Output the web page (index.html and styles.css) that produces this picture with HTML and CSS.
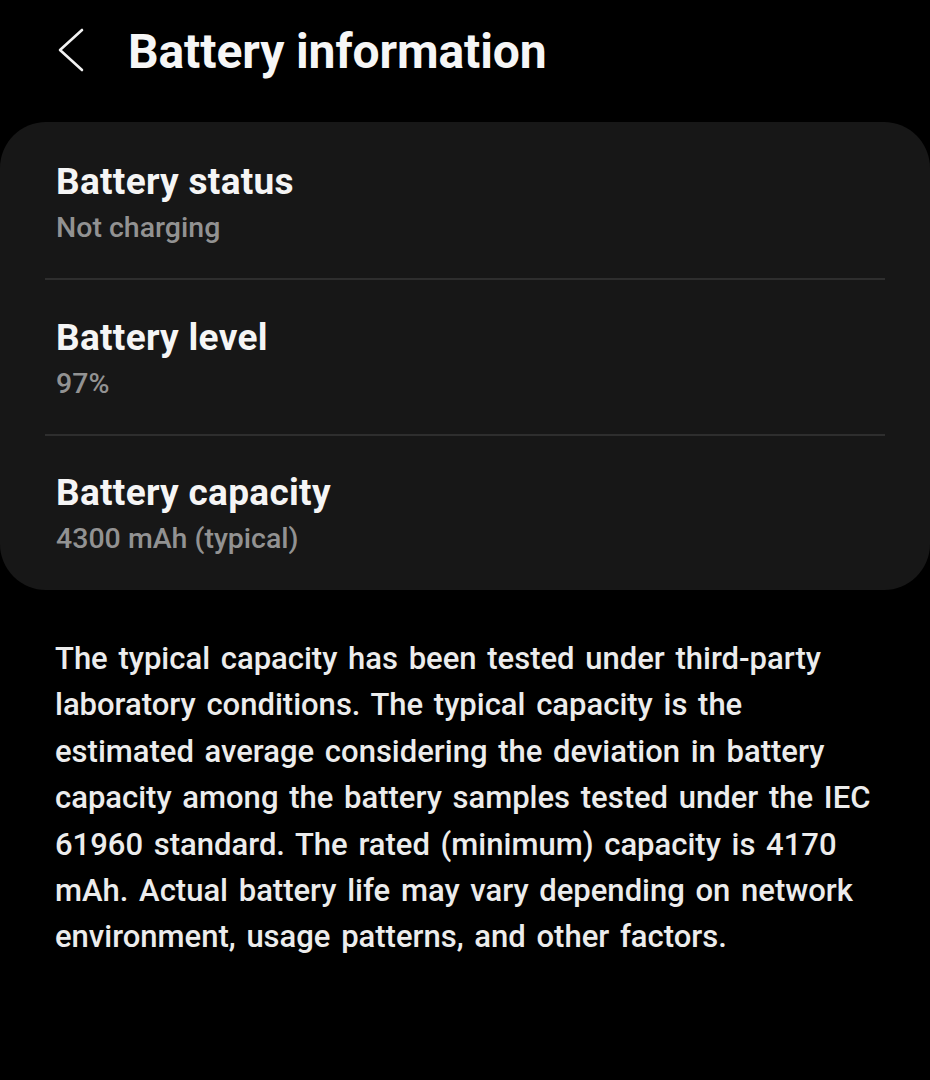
FILE: index.html
```html
<!DOCTYPE html>
<html lang="en">
<head>
<meta charset="utf-8">
<title>Battery information</title>
<link rel="stylesheet" href="styles.css">
</head>
<body>
<div class="screen">
  <header class="appbar">
    <svg class="back" width="28" height="46" viewBox="0 0 28 46" aria-hidden="true">
      <path d="M25 3 L3 23 L25 43" fill="none" stroke="#f2f2f2" stroke-width="2.6" stroke-linecap="round" stroke-linejoin="round"/>
    </svg>
    <h1 class="title">Battery information</h1>
  </header>

  <section class="card">
    <div class="row">
      <div class="row-title">Battery status</div>
      <div class="row-sub">Not charging</div>
    </div>
    <div class="divider"></div>
    <div class="row">
      <div class="row-title">Battery level</div>
      <div class="row-sub">97%</div>
    </div>
    <div class="divider"></div>
    <div class="row">
      <div class="row-title">Battery capacity</div>
      <div class="row-sub">4300 mAh (typical)</div>
    </div>
  </section>

  <p class="note">The typical capacity has been tested under third-party laboratory conditions. The typical capacity is the estimated average considering the deviation in battery capacity among the battery samples tested under the IEC 61960 standard. The rated (minimum) capacity is 4170 mAh. Actual battery life may vary depending on network environment, usage patterns, and other factors.</p>
</div>
</body>
</html>
```

FILE: styles.css
```css
html, body {
  margin: 0;
  padding: 0;
  background: #000;
}
body {
  font-family: Roboto, "Noto Sans", "Liberation Sans", sans-serif;
  color: #f4f4f4;
  width: 930px;
  height: 1080px;
  overflow: hidden;
}
.screen {
  display: flex;
  flex-direction: column;
}
.appbar {
  display: flex;
  align-items: center;
  height: 104px;
  padding: 0 0 0 57px;
  box-sizing: border-box;
}
.back {
  display: block;
  margin-top: -4px;
}
.title {
  margin: 0 0 0 43px;
  font-size: 48px;
  font-weight: 700;
  letter-spacing: -0.1px;
  color: #f6f6f6;
  line-height: 1;
}
.card {
  margin-top: 18px;
  background: #171717;
  border-radius: 46px;
  padding: 2px 45px 0;
  box-sizing: border-box;
  display: flex;
  flex-direction: column;
}
.row {
  padding: 3px 11px 0;
  height: 156px;
  box-sizing: border-box;
  display: flex;
  flex-direction: column;
  justify-content: center;
}
.row:last-child {
  height: 154px;
}
.row-title {
  font-size: 37px;
  font-weight: 700;
  letter-spacing: 0.3px;
  color: #f5f5f5;
  line-height: 48px;
}
.row-sub {
  font-size: 28.5px;
  font-weight: 500;
  letter-spacing: 0;
  color: #929292;
  line-height: 43px;
}
.divider {
  height: 2px;
  background: #2e2e2e;
  flex: none;
  margin-top: -2px;
}
.note {
  margin: 46px 0 0;
  padding: 0 44px 0 55px;
  font-size: 31px;
  font-weight: 500;
  letter-spacing: 0;
  word-spacing: 3px;
  line-height: 46.4px;
  color: #ececec;
}
```
